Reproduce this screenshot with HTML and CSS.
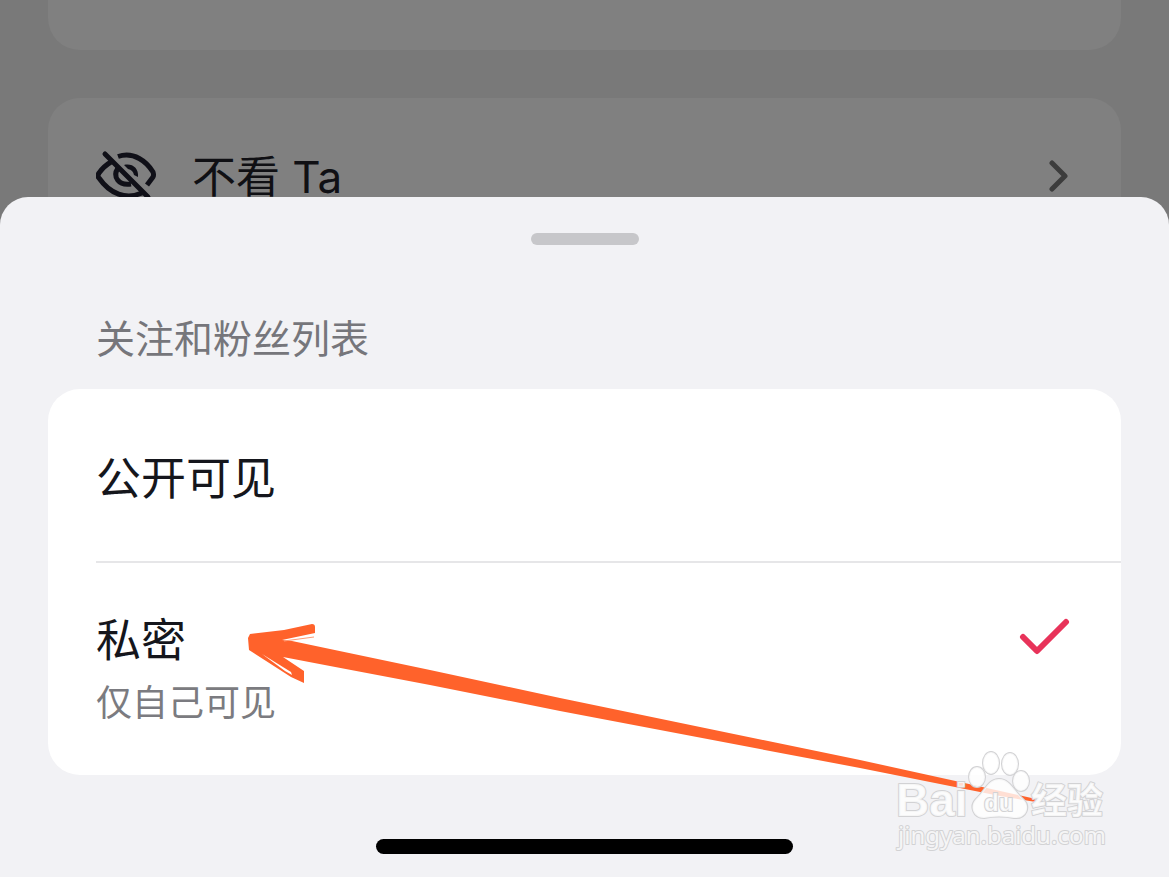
FILE: index.html
```html
<!DOCTYPE html>
<html lang="zh-CN">
<head>
<meta charset="utf-8">
<meta name="viewport" content="width=device-width, initial-scale=1">
<title>关注和粉丝列表</title>
<link rel="stylesheet" href="styles.css">
</head>
<body>
<div class="screen">
  <main class="backdrop">
    <div class="panel panel-upper"></div>
    <div class="panel">
      <a class="setting" href="#hide">
        <svg class="setting-icon" viewBox="0 0 60 52" aria-hidden="true">
          <g fill="none" stroke="#101018" stroke-width="5" stroke-linecap="butt" stroke-linejoin="round">
            <path d="M22 6.500C38 1 51 12 57 22Q58 25 57 27L51 35"/>
            <path d="M15 12Q8 16 3 23Q1 26 3 28C14 44 30 50 46 43"/>
            <path d="M22 18C16 27 23 36 35 34"/>
            <path fill="#101018" stroke="none" d="M28 15C36 13 43 18 42 27L38 25Q37 20 32 19Z"/>
            <path stroke-linecap="round" d="M9 4L52 47"/>
          </g>
        </svg>
        <span class="setting-name">不看 Ta</span>
        <svg class="chevron" viewBox="0 0 20 32" aria-hidden="true">
          <path d="M3 3L16 16L3 29" fill="none" stroke="#3c3c3c" stroke-width="5" stroke-linecap="round" stroke-linejoin="round"/>
        </svg>
      </a>
    </div>
  </main>
  <section class="sheet" role="dialog" aria-labelledby="sheet-title">
    <div class="grabber"></div>
    <h1 class="sheet-title" id="sheet-title">关注和粉丝列表</h1>
    <div class="options">
      <label class="option">
        <span class="option-text"><span class="option-name">公开可见</span></span>
        <input class="option-radio" type="radio" name="visibility">
        <svg class="tick" viewBox="0 0 52 40" aria-hidden="true"><path d="M4 20L18 34L47 5"/></svg>
      </label>
      <label class="option option-last">
        <span class="option-text">
          <span class="option-name">私密</span>
          <span class="option-note">仅自己可见</span>
        </span>
        <input class="option-radio" type="radio" name="visibility" checked>
        <svg class="tick" viewBox="0 0 52 40" aria-hidden="true"><path d="M4 20L18 34L47 5"/></svg>
      </label>
    </div>
    <div class="home-indicator"></div>
  </section>
  <svg class="arrow" viewBox="240 615 800 195" aria-hidden="true">
    <path fill="#ff622b" d="M250 634L284 630L312 624Q315 624 315 627V633L282 640L292 641L330 649L430 670L560 698L860 760L960 782L1036 799V802L1000 796L860 768L560 711L430 685L330 666L283 657L304 671V683L291 677L249 650L248 638Z"/>
    <path fill="none" stroke="#ff9a74" d="M284 641L314 637"/>
    <path fill="#fff" d="M262 654L291 672L292 675L285 671Z"/>
  </svg>
  <svg class="watermark" viewBox="0 0 240 120" role="img" aria-label="Baidu 经验">
    <g class="mark">
      <ellipse cx="97" cy="37" rx="8" ry="10"/>
      <ellipse cx="111" cy="23" rx="8" ry="11"/>
      <ellipse cx="130" cy="24" rx="8" ry="11"/>
      <ellipse cx="141" cy="41" rx="8" ry="10"/>
      <path d="M119 39C108 39 105 51 96 59C89 66 93 78 104 78Q119 75 134 78C147 79 151 66 143 59C134 51 130 39 119 39Z"/>
      <text class="mark-latin" x="16" y="76">Bai</text>
      <text class="mark-du" x="104" y="71">du</text>
      <text class="mark-han" x="151" y="74">经验</text>
      <text class="mark-url" x="18" y="104">jingyan.baidu.com</text>
    </g>
  </svg>
</div>
</body>
</html>
```
FILE: styles.css
```css
* {
  box-sizing: border-box;
}

body {
  margin: 0;
  font-family: Inter, "Noto Sans CJK SC", sans-serif;
  color: #15161c;
  background: #797979;
}

.screen {
  position: relative;
  display: flex;
  flex-direction: column;
  min-height: 100vh;
  overflow: hidden;
}

.backdrop {
  display: flex;
  flex-direction: column;
  gap: 48px;
  padding: 0 48px;
  background: #797979;
}

.panel {
  border-radius: 32px 32px 0 0;
  background: #808080;
}

.panel-upper {
  height: 50px;
  border-radius: 0 0 32px 32px;
}

.setting {
  display: flex;
  align-items: center;
  padding: 44px 52px 24px 48px;
  color: #101014;
  text-decoration: none;
}

.setting-icon {
  width: 60px;
  height: 52px;
}

.setting-name {
  flex: 1;
  margin-left: 36px;
  padding-top: 2px;
  font-size: 44px;
  line-height: 66px;
  font-weight: 400;
}

.chevron {
  width: 20px;
  height: 32px;
}

.sheet {
  position: relative;
  flex: 1;
  display: flex;
  flex-direction: column;
  margin-top: -37px;
  padding: 36px 48px 23px;
  border-radius: 28px 28px 0 0;
  background: #f2f2f5;
}

.grabber {
  align-self: center;
  width: 108px;
  height: 12px;
  border-radius: 6px;
  background: #c7c7ca;
}

.sheet-title {
  margin: 64px 48px 20px;
  color: #76767b;
  font-size: 39px;
  line-height: 60px;
  font-weight: 400;
}

.options {
  border-radius: 32px;
  background: #fff;
}

.option {
  display: flex;
  align-items: center;
  margin-left: 48px;
  padding: 56px 50px 48px 0;
  border-bottom: 2px solid #e6e6e8;
}

.option-last {
  align-items: flex-start;
  padding: 44px 50px 44px 0;
  border-bottom: 0;
}

.option-text {
  flex: 1;
  display: flex;
  flex-direction: column;
}

.option-name {
  font-size: 45px;
  line-height: 68px;
}

.option-note {
  color: #7b7b80;
  font-size: 36px;
  line-height: 56px;
}

.option-radio {
  appearance: none;
  width: 0;
  height: 0;
  margin: 0;
}

.tick {
  width: 52px;
  height: 40px;
  margin-top: 10px;
  fill: none;
  stroke: #e8335a;
  stroke-width: 6px;
  stroke-linecap: round;
  stroke-linejoin: round;
  visibility: hidden;
}

.option-radio:checked + .tick {
  visibility: visible;
}

.home-indicator {
  align-self: center;
  width: 417px;
  height: 15px;
  margin-top: auto;
  border-radius: 8px;
  background: #000;
}

.arrow {
  position: absolute;
  left: 240px;
  top: 615px;
  width: 800px;
  height: 195px;
  pointer-events: none;
}

.watermark {
  position: absolute;
  right: 49px;
  bottom: 17px;
  width: 240px;
  height: 120px;
  pointer-events: none;
}

.mark {
  fill: #fff;
  fill-opacity: 0.8;
  stroke: #d2d2d4;
  stroke-width: 2px;
  stroke-linejoin: round;
  paint-order: stroke;
}

.mark-latin {
  font: 700 46px "Liberation Sans", sans-serif;
}

.mark-du {
  font: 700 24px "Liberation Sans", sans-serif;
}

.mark-han {
  font: 700 36px "Noto Sans CJK SC", sans-serif;
}

.mark-url {
  font: 400 24px "Noto Sans", sans-serif;
}
```
